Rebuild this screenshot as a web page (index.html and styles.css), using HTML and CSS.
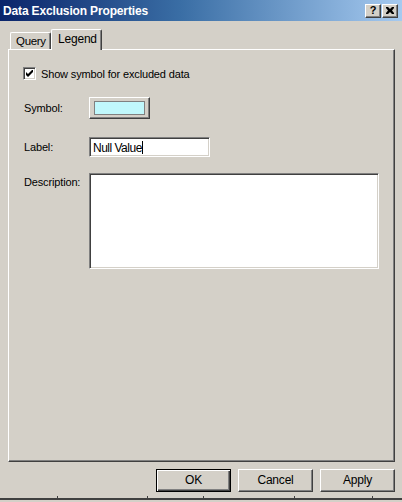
FILE: index.html
```html
<!DOCTYPE html>
<html>
<head>
<meta charset="utf-8">
<link rel="stylesheet" href="styles.css">
</head>
<body>
<div class="window">
  <div class="titlebar">
    <span class="title">Data Exclusion Properties</span>
    <div class="caption-btns">
      <span class="cap-btn q">?</span>
      <span class="cap-btn x"><svg width="8" height="7" viewBox="0 0 8 7"><path d="M0 0h2l2 2 2-2h2v1L6 3.5 8 6v1H6L4 5 2 7H0V6l2-2.5L0 1z" fill="#000"/></svg></span>
    </div>
  </div>
  <div class="content">
    <div class="tabs">
      <div class="tab">Query</div>
      <div class="tab active">Legend</div>
    </div>
    <div class="panel">
      <label class="check-row">
        <span class="checkbox"><svg width="7" height="7" viewBox="0 0 7 7"><path d="M0 2v3l2 2L7 2V-1L2 4z" fill="#000"/></svg></span>
        <span>Show symbol for excluded data</span>
      </label>
      <div class="form">
        <span class="lbl lbl-symbol">Symbol:</span>
        <span class="sym-btn"><span class="swatch"></span></span>
        <span class="lbl lbl-label">Label:</span>
        <span class="textbox">Null Value<span class="caret"></span></span>
        <span class="lbl lbl-desc">Description:</span>
        <span class="textarea"></span>
      </div>
    </div>
    <div class="buttons">
      <span class="btn default"><span class="btn-in">OK</span></span>
      <span class="btn"><span class="btn-in">Cancel</span></span>
      <span class="btn"><span class="btn-in">Apply</span></span>
    </div>
  </div>
  <div class="bottomline">
    <span class="tick t1"></span><span class="tick t2"></span><span class="tick t3"></span><span class="tick t4"></span><span class="tick t5"></span>
  </div>
</div>
</body>
</html>
```
FILE: styles.css
```css
* { box-sizing: border-box; }
html, body { margin: 0; padding: 0; }
body {
  background: #d4d0c8;
  font-family: "Liberation Sans", Arial, sans-serif;
  font-size: 11px;
  letter-spacing: -0.15px;
  color: #000;
  width: 402px;
  height: 502px;
  overflow: hidden;
}
.window {
  width: 402px;
  height: 502px;
  display: flex;
  flex-direction: column;
  background: #d4d0c8;
}
.titlebar {
  height: 21px;
  display: flex;
  align-items: center;
  justify-content: space-between;
  background: linear-gradient(to right, #0a246a 0%, #3a6ea5 45%, #a6caf0 100%);
  padding: 0 4px 0 3px;
}
.title {
  color: #fff;
  font-weight: bold;
  font-size: 12px;
  letter-spacing: -0.15px;
}
.caption-btns { display: flex; gap: 1px; }
.cap-btn {
  width: 16px;
  height: 14px;
  background: #d4d0c8;
  border-top: 1px solid #fff;
  border-left: 1px solid #fff;
  border-right: 1px solid #404040;
  border-bottom: 1px solid #404040;
  box-shadow: inset -1px -1px 0 #808080;
  display: flex;
  align-items: center;
  justify-content: center;
  font-weight: bold;
  font-size: 11px;
  line-height: 1;
}
.cap-btn.q { padding-bottom: 1px; }
.content {
  flex: 1;
  display: flex;
  flex-direction: column;
  padding: 8px 0 0 8px;
}
.tabs {
  display: flex;
  align-items: flex-end;
  height: 20px;
  padding-left: 2px;
}
.tab {
  height: 17px;
  width: 41px;
  border-top: 1px solid #fff;
  border-left: 1px solid #fff;
  border-right: 1px solid #404040;
  box-shadow: inset -1px 0 0 #808080;
  border-radius: 2px 2px 0 0;
  padding: 2px 0 0 5px;
  background: #d4d0c8;
  font-size: 11.5px;
  letter-spacing: -0.3px;
}
.tab.active {
  height: 21px;
  width: 51px;
  margin-bottom: -1px;
  position: relative;
  z-index: 1;
  padding: 2px 0 0 6px;
  font-size: 12px;
  letter-spacing: -0.2px;
}
.panel {
  width: 387px;
  height: 413px;
  border-top: 1px solid #fff;
  border-left: 1px solid #fff;
  border-right: 1px solid #404040;
  border-bottom: 1px solid #404040;
  box-shadow: inset -1px -1px 0 #808080;
  padding: 17px 0 0 14px;
}
.check-row {
  display: flex;
  align-items: center;
  gap: 5px;
  height: 13px;
}
.checkbox {
  width: 13px;
  height: 13px;
  background: #fff;
  border-top: 1px solid #808080;
  border-left: 1px solid #808080;
  border-right: 1px solid #fff;
  border-bottom: 1px solid #fff;
  box-shadow: inset 1px 1px 0 #404040, inset -1px -1px 0 #d4d0c8;
  display: flex;
  align-items: center;
  justify-content: center;
}
.form {
  display: grid;
  grid-template-columns: 66px auto;
  grid-template-rows: 22px 18px 20px 16px 96px;
  margin-top: 17px;
  align-items: start;
  justify-items: start;
}
.lbl { padding-left: 1px; }
.lbl-symbol { grid-row: 1; grid-column: 1; margin-top: 5px; }
.sym-btn { grid-row: 1; grid-column: 2; }
.lbl-label { grid-row: 3; grid-column: 1; margin-top: 4px; }
.textbox { grid-row: 3; grid-column: 2; }
.lbl-desc { grid-row: 5; grid-column: 1; margin-top: 3px; }
.textarea { grid-row: 5; grid-column: 2; }
.sym-btn {
  width: 61px;
  height: 22px;
  border-top: 1px solid #fff;
  border-left: 1px solid #fff;
  border-right: 1px solid #404040;
  border-bottom: 1px solid #404040;
  box-shadow: inset -1px -1px 0 #808080;
  display: flex;
  align-items: center;
  justify-content: center;
  padding: 0 1px 1px 0;
}
.swatch {
  width: 51px;
  height: 14px;
  background: #c0f8fc;
  border: 1px solid #808080;
}
.textbox {
  width: 121px;
  height: 20px;
  background: #fff;
  border-top: 1px solid #808080;
  border-left: 1px solid #808080;
  border-right: 1px solid #fff;
  border-bottom: 1px solid #fff;
  box-shadow: inset 1px 1px 0 #404040, inset -1px -1px 0 #d4d0c8;
  padding: 3px 0 0 3px;
  font-size: 12px;
  letter-spacing: -0.5px;
  display: flex;
  align-items: flex-start;
}
.caret {
  display: inline-block;
  width: 1px;
  height: 13px;
  background: #000;
}
.textarea {
  width: 290px;
  height: 96px;
  background: #fff;
  border-top: 1px solid #808080;
  border-left: 1px solid #808080;
  border-right: 1px solid #fff;
  border-bottom: 1px solid #fff;
  box-shadow: inset 1px 1px 0 #404040, inset -1px -1px 0 #d4d0c8;
}
.buttons {
  display: flex;
  justify-content: flex-end;
  gap: 7px;
  margin-top: 7px;
  padding-right: 7px;
}
.btn {
  width: 75px;
  height: 23px;
  border-top: 1px solid #fff;
  border-left: 1px solid #fff;
  border-right: 1px solid #404040;
  border-bottom: 1px solid #404040;
  box-shadow: inset -1px -1px 0 #808080;
  display: flex;
  font-size: 12px;
  letter-spacing: -0.2px;
}
.btn-in {
  flex: 1;
  display: flex;
  align-items: center;
  justify-content: center;
  padding-bottom: 1px;
}
.btn.default {
  border: 1px solid #000;
  box-shadow: inset 1px 1px 0 #fff, inset -1px -1px 0 #404040, inset -2px -2px 0 #808080;
}
.bottomline {
  height: 3px;
  border-top: 2px solid #404040;
  margin-bottom: 1px;
  position: relative;
}
.tick {
  position: absolute;
  top: -4px;
  width: 1px;
  height: 2px;
  background: #404040;
}
.t1 { left: 57px; }
.t2 { left: 147px; }
.t3 { left: 203px; }
.t4 { left: 294px; }
.t5 { left: 372px; }
```
